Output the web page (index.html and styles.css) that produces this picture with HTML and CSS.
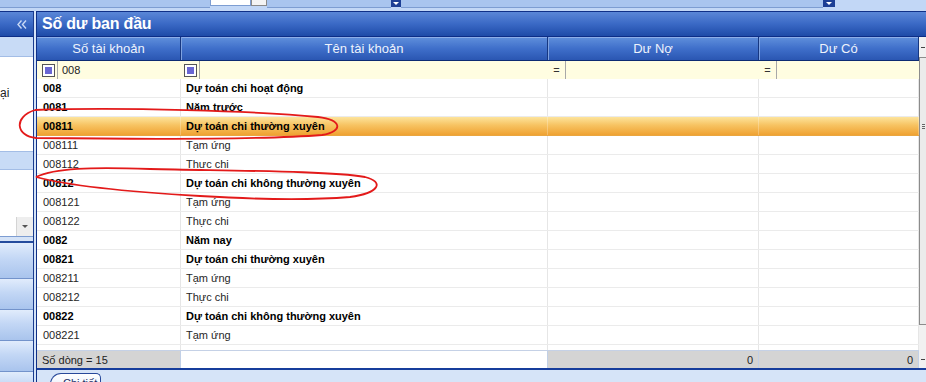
FILE: index.html
```html
<!DOCTYPE html>
<html lang="vi">
<head>
  <meta charset="UTF-8">
  <title>Số dư ban đầu</title>
  <link rel="stylesheet" href="styles.css">
</head>
<body>
  <div class="topbar">
    <div class="tb-seg seg-a"></div>
    <div class="tb-input"></div>
    <div class="tb-check"></div>
    <div class="tb-seg seg-b"></div>
    <div class="tb-drop"><span class="tri"></span></div>
    <div class="tb-dot"></div>
    <div class="tb-seg seg-c"></div>
    <div class="tb-drop wide"><span class="tri"></span></div>
  </div>

  <div class="workspace">
    <div class="nav">
      <div class="nav-head">
        <svg width="10" height="9" viewBox="0 0 10 9"><path d="M4.5 0.5 L1 4.5 L4.5 8.5 M9 0.5 L5.5 4.5 L9 8.5" fill="none" stroke="#c9d9f5" stroke-width="1.4"/></svg>
      </div>
      <div class="nav-band"></div>
      <div class="nav-white tall"><span class="nav-label">ại</span></div>
      <div class="nav-band thin"></div>
      <div class="nav-white short"></div>
      <div class="nav-combo">
        <div class="combo-field"></div>
        <div class="combo-btn"><span class="tri dark"></span></div>
      </div>
      <div class="nav-gap"></div>
      <div class="nav-btn first"></div>
      <div class="nav-btn"></div>
      <div class="nav-btn"></div>
      <div class="nav-btn"></div>
      <div class="nav-btn"></div>
    </div>

    <div class="main">
      <div class="title">Số dư ban đầu</div>
      <div class="grid-wrap">
        <div class="table">
          <div class="row hdr">
            <div>Số tài khoản</div>
            <div>Tên tài khoản</div>
            <div>Dư Nợ</div>
            <div>Dư Có</div>
          </div>
          <div class="row filter">
            <div class="fcell"><span class="chk"></span><span class="fsep"></span><span class="ftext">008</span></div>
            <div class="fcell c2"><span class="chk"></span><span class="fsep"></span></div>
            <div class="fcell c3"><span class="op">=</span><span class="fsep"></span></div>
            <div class="fcell c3"><span class="op">=</span><span class="fsep"></span></div>
          </div>
          <div class="body">
            <div class="row rec b"><div>008</div><div>Dự toán chi hoạt động</div><div></div><div></div></div>
            <div class="row rec b"><div>0081</div><div>Năm trước</div><div></div><div></div></div>
            <div class="row rec b sel"><div>00811</div><div>Dự toán chi thường xuyên</div><div></div><div></div></div>
            <div class="row rec"><div>008111</div><div>Tạm ứng</div><div></div><div></div></div>
            <div class="row rec"><div>008112</div><div>Thực chi</div><div></div><div></div></div>
            <div class="row rec b"><div>00812</div><div>Dự toán chi không thường xuyên</div><div></div><div></div></div>
            <div class="row rec"><div>008121</div><div>Tạm ứng</div><div></div><div></div></div>
            <div class="row rec"><div>008122</div><div>Thực chi</div><div></div><div></div></div>
            <div class="row rec b"><div>0082</div><div>Năm nay</div><div></div><div></div></div>
            <div class="row rec b"><div>00821</div><div>Dự toán chi thường xuyên</div><div></div><div></div></div>
            <div class="row rec"><div>008211</div><div>Tạm ứng</div><div></div><div></div></div>
            <div class="row rec"><div>008212</div><div>Thực chi</div><div></div><div></div></div>
            <div class="row rec b"><div>00822</div><div>Dự toán chi không thường xuyên</div><div></div><div></div></div>
            <div class="row rec"><div>008221</div><div>Tạm ứng</div><div></div><div></div></div>
            <div class="row rec"><div></div><div></div><div></div><div></div></div>
          </div>
          <div class="row foot">
            <div>Số dòng = 15</div>
            <div class="blank"></div>
            <div class="num">0</div>
            <div class="num">0</div>
          </div>
        </div>
        <div class="vscroll">
          <div class="vs-end"><span class="dash"></span></div>
          <div class="vs-thumb"><span class="grip"></span></div>
          <div class="vs-space"></div>
          <div class="vs-end low"><span class="dash"></span></div>
        </div>
      </div>
      <div class="tabs">
        <div class="tab">Chi tiết</div>
      </div>
    </div>
  </div>

  <!-- red marker circles drawn over the grid -->
  <svg class="marks" width="926" height="382" viewBox="0 0 926 382">
    <path d="M35 110 C120 107 260 111 318 117 C342 120 344 131 322 135 C260 140 120 139 36 138 C16 136 13 117 35 110" fill="none" stroke="#e31a1a" stroke-width="1.8"/>
    <path d="M36 177 C55 168 90 167 150 169 C240 171 330 171 365 177 C385 182 379 193 350 197 C300 201 250 199 200 196 C130 192 70 186 36 177" fill="none" stroke="#e31a1a" stroke-width="1.8"/>
  </svg>
</body>
</html>
```

FILE: styles.css
```css
* {
  box-sizing: border-box;
}
body {
  margin: 0;
  width: 926px;
  height: 382px;
  overflow: hidden;
  position: relative;
  background: #d5e3f7;
  font-family: "Liberation Sans", Arial, sans-serif;
  font-size: 11px;
  color: #000;
}

/* top strip (cut off toolbar) */
.topbar {
  height: 11px;
  background: #c2d7f6;
  display: flex;
  align-items: flex-start;
}
.tb-seg {
  height: 8px;
  background: #a9c5ef;
  border-bottom: 1px solid #7d9dd2;
}
.seg-a { width: 210px; }
.seg-b { width: 124px; }
.seg-c { width: 418px; }
.tb-input {
  width: 41px;
  height: 6px;
  background: #fff;
  border: 1px solid #7d9dd2;
  border-top: 0;
}
.tb-check {
  width: 16px;
  height: 6px;
  background: #f4f4f4;
  border: 1px solid #8a8a8a;
  border-top: 0;
}
.tb-drop {
  width: 10px;
  height: 7px;
  background: #1d3f95;
  display: flex;
  justify-content: center;
  padding-top: 2px;
}
.tb-drop.wide { width: 12px; }
.tb-dot {
  width: 4px;
  height: 8px;
  background: #a9c5ef;
  border-bottom: 1px solid #7d9dd2;
}
.tri {
  width: 0;
  height: 0;
  border-left: 3px solid transparent;
  border-right: 3px solid transparent;
  border-top: 3px solid #fff;
}
.tri.dark {
  border-top-color: #555;
}

.workspace {
  display: flex;
  height: 371px;
}

/* left navigation panel */
.nav {
  width: 34px;
  margin-right: 2px;
  border-top: 1px solid #0f3088;
  border-right: 1px solid #1a3c8f;
  background: #fff;
  display: flex;
  flex-direction: column;
  overflow: hidden;
}
.nav-head {
  height: 25px;
  flex: none;
  background: linear-gradient(#5a87d7, #3a69c5 50%, #1e4ba8);
  border-bottom: 1px solid #0c2d87;
  display: flex;
  align-items: center;
  justify-content: flex-end;
  padding-right: 6px;
}
.nav-band {
  height: 20px;
  flex: none;
  background: #c8dbf6;
  border-bottom: 1px solid #a3bde6;
}
.nav-band.thin {
  height: 19px;
  border-top: 1px solid #a3bde6;
}
.nav-white {
  flex: none;
  background: #fff;
}
.nav-white.tall {
  height: 94px;
  padding-top: 29px;
  white-space: nowrap;
}
.nav-white.short { height: 47px; }
.nav-label {
  font-size: 12px;
  color: #222;
}
.nav-combo {
  height: 20px;
  flex: none;
  display: flex;
  border-bottom: 1px solid #7d9dd2;
}
.combo-field {
  flex: 1;
  background: #fff;
}
.combo-btn {
  width: 17px;
  background: #eeeeee;
  border-left: 1px solid #d4d4d4;
  display: flex;
  align-items: center;
  justify-content: center;
}
.nav-gap {
  height: 6px;
  flex: none;
  background: #d5e3f7;
  border-bottom: 2px solid #244b9d;
}
.nav-btn {
  height: 31px;
  flex: none;
  background: linear-gradient(#e1ecfc, #c3d7f5 45%, #a9c4ed);
  border-bottom: 1px solid #7393cb;
}
.nav-btn.first { height: 36px; }

/* main panel */
.main {
  flex: 1;
  border-top: 1px solid #0f3088;
  border-left: 1px solid #0f3088;
  display: flex;
  flex-direction: column;
}
.title {
  height: 25px;
  flex: none;
  background: linear-gradient(#5a87d7, #3a69c5 50%, #1e4ba8);
  border-bottom: 1px solid #0c2d87;
  color: #fff;
  font-weight: bold;
  font-size: 16px;
  letter-spacing: -0.2px;
  padding-left: 5px;
  line-height: 24px;
}
.grid-wrap {
  height: 331px;
  flex: none;
  display: flex;
}
.table {
  width: 882px;
  display: flex;
  flex-direction: column;
}
.row {
  display: grid;
  grid-template-columns: 144px 367px 211px 160px;
}
.hdr {
  height: 24px;
  background: linear-gradient(#6090dc, #3f6fca 50%, #2a56b2);
  border-bottom: 1px solid #0d2b72;
  box-shadow: inset 0 1px #8eaee8;
}
.hdr div {
  display: flex;
  align-items: center;
  justify-content: center;
  color: #eef3fc;
  font-size: 13px;
  border-right: 1px solid #163781;
  box-shadow: inset 1px 0 #7fa2e0;
}
.hdr div:first-child {
  box-shadow: none;
}

.filter {
  height: 18px;
  background: #fffde1;
}
.fcell {
  display: flex;
  align-items: center;
  padding-left: 5px;
}
.fcell.c2 { padding-left: 3px; }
.fcell.c3 { padding-left: 3px; }
.chk {
  width: 13px;
  height: 13px;
  border: 1px solid #555;
  background: #fff;
  padding: 2px;
  margin-right: 2px;
}
.chk::after {
  content: "";
  display: block;
  width: 7px;
  height: 7px;
  background: #6a67d3;
}
.fsep {
  width: 1px;
  align-self: stretch;
  background: #a8a8a8;
}
.ftext {
  padding-left: 4px;
  color: #222;
}
.op {
  width: 11px;
  margin-right: 3px;
  text-align: center;
  color: #333;
}

.body {
  height: 271px;
  overflow: hidden;
  background: #fff;
}
.rec {
  height: 19px;
  border-bottom: 1px solid #ebebeb;
}
.rec div {
  display: flex;
  align-items: center;
  padding-left: 5px;
  white-space: nowrap;
  overflow: hidden;
  color: #262626;
  border-right: 1px solid #e6e6e6;
}
.rec div:first-child {
  padding-left: 6px;
}
.rec.b div {
  font-weight: bold;
  color: #000;
}
.rec.sel {
  background: linear-gradient(#fde49c, #f7c362 45%, #efa232);
  border-bottom-color: #e9a640;
}
.rec.sel div {
  border-right-color: rgba(255, 255, 255, 0.25);
}

.foot {
  height: 18px;
  background: #d4d4d4;
  border-top: 1px solid #c5d1e6;
}
.foot div {
  display: flex;
  align-items: center;
  padding: 0 5px;
  color: #222;
  border-right: 1px solid #c2d0e6;
}
.foot .blank { background: #fff; }
.foot .num { justify-content: flex-end; }

/* vertical scrollbar, only its left edge shows */
.vscroll {
  flex: 1;
  background: #f1f1f1;
  display: flex;
  flex-direction: column;
  align-items: flex-end;
}
.vs-end {
  height: 20px;
  width: 100%;
  display: flex;
  align-items: center;
  justify-content: flex-end;
  padding-right: 1px;
}
.vs-end.low { height: 18px; }
.dash {
  width: 4px;
  height: 1px;
  background: #444;
}
.vs-thumb {
  width: 7px;
  height: 268px;
  border: 1px solid #8c8c8c;
  border-right: 0;
  background: #ebebeb;
  display: flex;
  align-items: center;
  justify-content: center;
}
.grip {
  width: 3px;
  height: 5px;
  margin-top: -130px;
  border-top: 1px solid #666;
  border-bottom: 1px solid #666;
  box-shadow: inset 0 1px #f1f1f1, inset 0 2px #666;
}
.vs-space { flex: 1; }

.tabs {
  flex: 1;
  border-top: 2px solid #163d9c;
  background: #d6e4f8;
  padding: 3px 0 0 13px;
}
.tab {
  width: 51px;
  height: 16px;
  border: 1px solid #27489a;
  border-bottom: 0;
  border-radius: 11px 5px 0 0;
  background: linear-gradient(#fff, #e6eefb);
  color: #1c2f66;
  padding: 3px 0 0 12px;
}

.marks {
  position: absolute;
  left: 0;
  top: 0;
  pointer-events: none;
}
```
